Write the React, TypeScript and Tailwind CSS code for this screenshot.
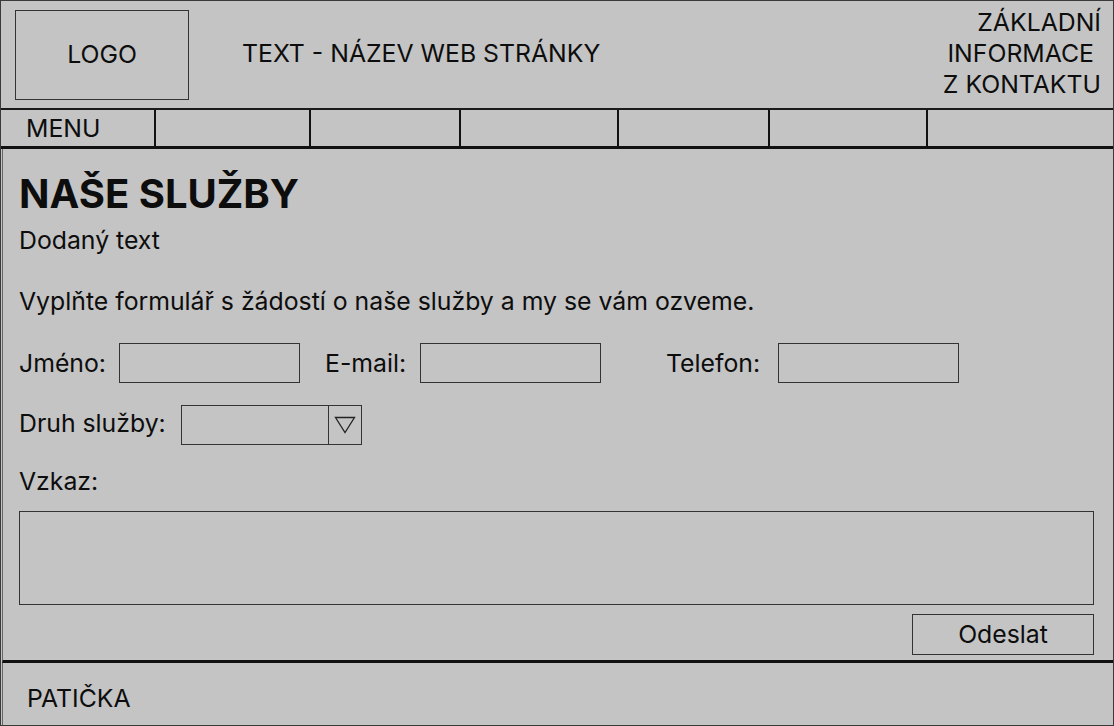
import React from "react";

export default function App() {
  const menuCells = [
    "w-[155px]",
    "w-[155px]",
    "w-[150px]",
    "w-[158px]",
    "w-[151px]",
    "w-[158px]",
  ];
  return (
    <div className="w-[1114px] h-[726px] bg-[#c4c4c4] border border-[#3a3a3a] flex flex-col text-[#0d0d0d] font-['Inter',sans-serif] overflow-hidden">
      {/* Header */}
      <header className="h-[109px] shrink-0 border-b-2 border-[#1a1a1a] flex items-start">
        <div className="ml-[14px] mt-[9px] w-[174px] h-[90px] border border-[#333] flex items-center justify-center text-[24.8px] leading-none pb-[2px]">
          LOGO
        </div>
        <div className="ml-[53px] h-[104px] flex items-center text-[24.8px] leading-none">
          TEXT - NÁZEV WEB STRÁNKY
        </div>
        <div className="ml-auto mr-[12px] h-[105px] flex flex-col justify-center text-right text-[24.8px] leading-[31px]">
          <span>ZÁKLADNÍ</span>
          <span>INFORMACE&nbsp;</span>
          <span>Z KONTAKTU</span>
        </div>
      </header>

      {/* Menu */}
      <nav className="h-[39px] shrink-0 border-b-[3px] border-[#111] flex">
        {menuCells.map((w, i) => (
          <div
            key={i}
            className={`${w} h-full border-r-2 border-[#111] flex items-center text-[24.8px] leading-none`}
          >
            {i === 0 ? <span className="ml-[25px]">MENU</span> : null}
          </div>
        ))}
        <div className="flex-1 h-full" />
      </nav>

      {/* Main */}
      <main className="h-[514px] shrink-0 border-b-[3px] border-[#111] border-l border-l-[#666] ml-[1px] pl-[16px] pr-[18px] pt-[21px] flex flex-col">
        <h1 className="text-[40px] leading-[48px] font-bold">NAŠE SLUŽBY</h1>
        <p className="mt-[8px] text-[24.8px] leading-[29px]">Dodaný text</p>
        <p className="mt-[32px] text-[24.8px] leading-[29px]">
          Vyplňte formulář s žádostí o naše služby a my se vám ozveme.
        </p>

        <div className="mt-[27px] flex items-center h-[40px] text-[24.8px] leading-none">
          <span className="w-[100px]">Jméno:</span>
          <div className="w-[181px] h-[40px] border border-[#333]" />
          <span className="ml-[25px] w-[95px]">E-mail:</span>
          <div className="w-[181px] h-[40px] border border-[#333]" />
          <span className="ml-[65px] w-[112px]">Telefon:</span>
          <div className="w-[181px] h-[40px] border border-[#333]" />
        </div>

        <div className="mt-[22px] flex items-center h-[40px] text-[24.8px] leading-none">
          <span className="w-[162px] -mt-[3px]">Druh služby:</span>
          <div className="w-[181px] h-[40px] border border-[#333] flex">
            <div className="flex-1" />
            <div className="w-[33px] h-full border-l border-[#333] flex items-center justify-center">
              <svg width="22" height="18" viewBox="0 0 22 18">
                <path d="M1.5 1.5 H20.5 L11 16.5 Z" fill="none" stroke="#222" strokeWidth="1.3" strokeLinejoin="miter" />
              </svg>
            </div>
          </div>
        </div>

        <p className="mt-[22px] text-[24.8px] leading-[29px]">Vzkaz:</p>
        <div className="mt-[15px] h-[94px] w-[1075px] border border-[#333]" />

        <div className="mt-[9px] w-[1075px] flex justify-end">
          <button className="w-[182px] h-[41px] border border-[#333] text-[24.8px] leading-none flex items-center justify-center">
            Odeslat
          </button>
        </div>
      </main>

      {/* Footer */}
      <footer className="flex-1 border-l border-l-[#666] ml-[1px] flex items-center pt-[8px]">
        <span className="ml-[24px] text-[24.8px] leading-none">PATIČKA</span>
      </footer>
    </div>
  );
}
